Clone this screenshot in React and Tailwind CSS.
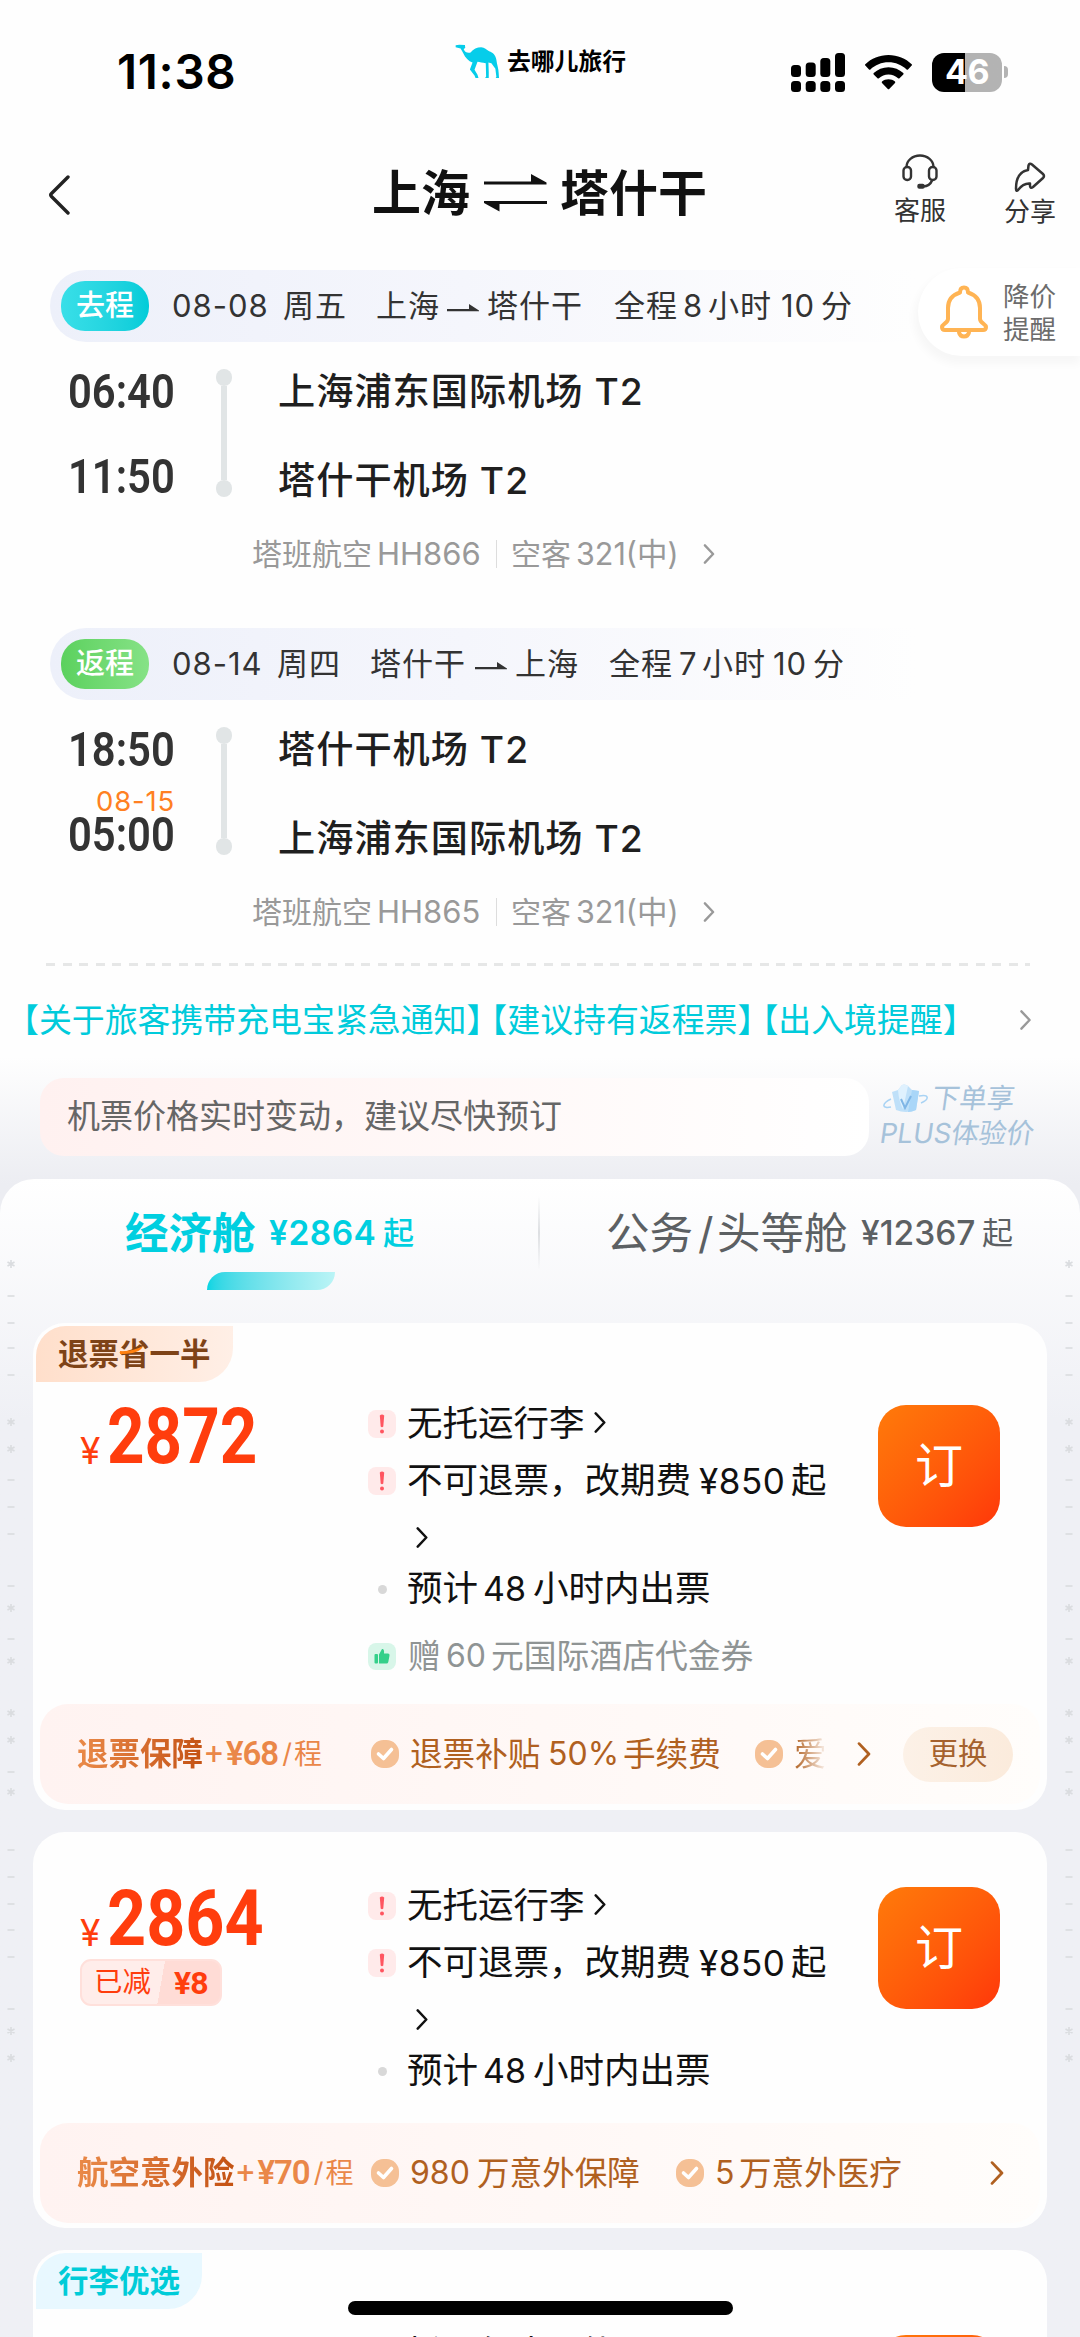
import React from "react";

const tramoIda = {
  etiqueta: "去程",
  colorEtiqueta: "bg-linear-to-r from-[#38dfe8] to-[#00ccd9]",
  fecha: [
    ["08-08", "w-[111px]"],
    ["周五", "w-[93px]"],
    ["上海", "w-[71px]"],
    ["→", "w-[40px]"],
    ["塔什干", "w-[127px]"],
    ["全程", "w-[69px]"],
    ["8", "w-[25px]"],
    ["小时", "w-[73px]"],
    ["10", "w-[40px]"],
    ["分", "w-[32px]"],
  ],
  salida: "06:40",
  llegada: "11:50",
  origen: "上海浦东国际机场",
  destino: "塔什干机场",
  vuelo: "HH866",
};

const tramoVuelta = {
  etiqueta: "返程",
  colorEtiqueta: "bg-linear-to-r from-[#5bd15e] to-[#86e286]",
  fecha: [
    ["08-14", "w-[105px]"],
    ["周四", "w-[93px]"],
    ["塔什干", "w-[105px]"],
    ["→", "w-[40px]"],
    ["上海", "w-[94px]"],
    ["全程", "w-[70px]"],
    ["7", "w-[23px]"],
    ["小时", "w-[71px]"],
    ["10", "w-[40px]"],
    ["分", "w-[32px]"],
  ],
  salida: "18:50",
  llegada: "05:00",
  diaLlegada: "08-15",
  origen: "塔什干机场",
  destino: "上海浦东国际机场",
  vuelo: "HH865",
};

// [posición vertical, símbolo] de la trama lateral
const trama = [
  [1264, "*"], [1296, "-"], [1323, "-"], [1348, "-"], [1375, "-"],
  [1422, "*"], [1449, "*"], [1480, "-"], [1507, "-"], [1534, "-"],
  [1586, "-"], [1608, "*"], [1639, "-"], [1661, "*"], [1713, "*"],
  [1740, "*"], [1772, "-"], [1792, "*"], [1850, "-"], [1877, "-"],
  [1904, "-"], [1930, "-"], [1957, "-"], [2009, "-"], [2031, "*"],
  [2058, "*"],
];

const Chevron = ({ className }) => (
  <svg
    viewBox="0 0 12 22"
    className={className}
    fill="none"
    stroke="currentColor"
    strokeLinecap="round"
    strokeLinejoin="round"
  >
    <path d="M1.5 1.5 10.5 11 1.5 20.5" strokeWidth="2.6" />
  </svg>
);

const Camello = () => (
  <svg viewBox="45 41 136 104" className="w-[45px] h-[35px]" fill="#06cdea">
    <path d="M47 44 58 42 75 43 76 52 71 55C75 65 82 68 92 66C100 55 112 50 124 50C135 51 140 58 148 62C160 65 168 75 170 88C172 105 177 115 177 128L178 143H168L170 139 167 115 155 98 146 96 147 125V143H136L139 138 138 98C128 97 120 95 113 94L104 118 113 133 116 143H107L104 135 90 117 98 96C86 92 76 82 70 68L62 54 47 50Z" />
  </svg>
);

const BarraEstado = () => (
  <div className="flex h-[144px] items-center text-black">
    <div className="ml-[117px] w-[338px] text-[47.5px] font-semibold tracking-[0.7px]">
      11:38
    </div>
    <div className="-mt-[21px] flex items-center">
      <Camello />
      <span className="ml-[7px] w-[284px] text-[23.8px] font-bold leading-none">
        去哪儿旅行
      </span>
    </div>
    <svg viewBox="0 0 54 39" className="h-[39px] w-[54px]" fill="black">
      <rect x="0" y="12" width="10" height="12" rx="3.5" />
      <rect x="14.7" y="9.5" width="10" height="14.5" rx="3.5" />
      <rect x="29.3" y="5" width="10" height="19" rx="3.5" />
      <rect x="44" y="0" width="10" height="24" rx="3.5" />
      <rect x="0" y="28" width="10" height="11" rx="3.5" />
      <rect x="14.7" y="28" width="10" height="11" rx="3.5" />
      <rect x="29.3" y="28" width="10" height="11" rx="3.5" />
      <rect x="44" y="28" width="10" height="11" rx="3.5" />
    </svg>
    <svg viewBox="0 0 47 35" className="ml-[20px] h-[35px] w-[47px]" fill="black">
      <path d="M23.5 0C14.500 0 6.300 3.500.300 9.200-.100 9.600-.100 10.200.300 10.600L4 14.400C4.400 14.800 5 14.800 5.400 14.400 10.200 9.900 16.500 7.200 23.500 7.200S36.800 9.900 41.600 14.400C42 14.800 42.600 14.800 43 14.400L46.700 10.600C47.100 10.200 47.100 9.600 46.700 9.200 40.700 3.500 32.500 0 23.500 0Z" />
      <path d="M23.5 12.200C17.800 12.200 12.600 14.400 8.700 18 8.300 18.400 8.300 19 8.700 19.400L12.500 23.200C12.900 23.600 13.500 23.600 13.900 23.200 16.500 20.800 19.800 19.400 23.500 19.400S30.500 20.800 33.100 23.200C33.500 23.600 34.100 23.600 34.500 23.200L38.300 19.400C38.700 19 38.700 18.400 38.300 18 34.400 14.400 29.200 12.200 23.500 12.200Z" />
      <path d="M23.500 24.200C21 24.200 18.800 25.100 17 26.500 16.600 26.900 16.600 27.500 17 27.900L22.800 33.900C23.200 34.300 23.800 34.300 24.200 33.900L30 27.900C30.400 27.500 30.400 26.900 30 26.500 28.200 25.100 26 24.200 23.500 24.200Z" />
    </svg>
    <div className="ml-[20px] flex h-[39px] w-[70px] items-center justify-center rounded-[12px] bg-linear-to-r from-black from-[47%] to-[#b3b3b3] to-[47%] text-[34px] font-bold leading-none tracking-[-0.5px] text-white">
      46
    </div>
    <div className="ml-[2px] h-[12px] w-[4px] rounded-r-full bg-[#b3b3b3]" />
  </div>
);

const Encabezado = () => (
  <div className="flex h-[98px] items-center">
    <svg
      viewBox="0 0 22 40"
      className="ml-[48px] mt-[3px] h-[40px] w-[22px]"
      fill="none"
      stroke="#222"
      strokeWidth="3.4"
      strokeLinecap="round"
      strokeLinejoin="round"
    >
      <path d="M20 2 3.500 18.500Q2 20 3.500 21.500L20 38" />
    </svg>
    <div className="ml-[302px] flex items-center text-[49px] font-bold leading-none text-[#111]">
      <span className="w-[112px]">上海</span>
      <svg viewBox="0 0 63 38" className="h-[38px] w-[63px]" fill="#111">
        <path d="M0 7.500H47V0L62.500 8.500V10.500H0Z" />
        <path d="M63 27H0V29L15.500 37.500V30H63Z" />
      </svg>
      <span className="ml-[13px] w-[147px]">塔什干</span>
    </div>
    <div className="-mt-[5px] ml-[187px] flex w-[52px] flex-col items-center text-[26px] text-[#333]">
      <svg
        viewBox="0 0 36 36"
        className="h-[36px] w-[36px]"
        fill="none"
        stroke="#333"
        strokeWidth="2.400"
      >
        <path d="M4.500 14V13A13.500 11.500 0 0 1 31.500 13V14" />
        <rect x="1.500" y="13" width="7.500" height="13" rx="3.600" />
        <rect x="27" y="13" width="7.500" height="13" rx="3.600" />
        <path d="M30 26.500Q28 32 21 32.500" />
        <rect x="16.500" y="31" width="5" height="2.600" rx="0.800" fill="#333" />
      </svg>
      <span className="mt-[5px] whitespace-nowrap leading-[32px]">客服</span>
    </div>
    <div className="-mb-[3px] ml-[58px] flex w-[52px] flex-col items-center text-[26px] text-[#333]">
      <svg
        viewBox="0 0 32 32"
        className="h-[32px] w-[32px]"
        fill="none"
        stroke="#333"
        strokeWidth="2.500"
        strokeLinejoin="round"
      >
        <path d="M14.500 4.500Q15.500 1.500 18 3.500L29 13Q31 15 29 17L19 26Q16.500 28 16 25V22.500C10 22 7 25 4 29Q2 31 2 27.500C2 17 6 10.500 14 9Z" />
      </svg>
      <span className="mt-[3px] whitespace-nowrap leading-[32px]">分享</span>
    </div>
  </div>
);

const Tramo = ({ tramo }) => (
  <div className="text-[#333]">
    <div className="ml-[50px] flex h-[72px] items-center rounded-l-[36px] bg-linear-to-r from-[#edf0fa] via-[#f5f6fc] via-40% to-[#fefefe] to-[84%] pl-[11px]">
      <div
        className={`flex h-[50px] w-[88px] items-center justify-center rounded-[24px] text-[29px] font-medium text-white ${tramo.colorEtiqueta}`}
      >
        {tramo.etiqueta}
      </div>
      <div className="ml-[23px] flex items-center text-[31px] leading-[40px] tracking-[1px]">
        {tramo.fecha.map(([texto, ancho], i) =>
          texto === "→" ? (
            <span key={i} className={`shrink-0 ${ancho}`}>
              <svg viewBox="0 0 32 8" className="mt-[3px] h-[8px] w-[32px]" fill="#333">
                <path d="M0 5H22V0L32 6.500V7.200H0Z" />
              </svg>
            </span>
          ) : (
            <span key={i} className={`shrink-0 whitespace-nowrap ${ancho}`}>
              {texto}
            </span>
          )
        )}
      </div>
    </div>

    <div className="flex h-[192px] pt-[25px]">
      <div className="flex w-[175px] flex-col items-end font-[Roboto,'Noto_Sans_CJK_SC',sans-serif] text-[48px] font-semibold">
        <span className="origin-right scale-x-[0.87] leading-[50px]">
          {tramo.salida}
        </span>
        <span className="h-[35px] pt-[10px] font-[Inter,sans-serif] text-[27.5px] font-normal leading-[32px] tracking-[0.8px] text-[#ff8022]">
          {tramo.diaLlegada}
        </span>
        <span className="origin-right scale-x-[0.87] leading-[50px]">
          {tramo.llegada}
        </span>
      </div>
      <div className="ml-[41px] mt-[2px] flex h-[128px] w-[16px] flex-col items-center">
        <span className="h-[17px] w-[16px] rounded-full bg-[#e1e5e6]" />
        <span className="w-[6px] flex-1 bg-[#e1e5e6]" />
        <span className="h-[17px] w-[16px] rounded-full bg-[#e1e5e6]" />
      </div>
      <div className="ml-[46px] flex flex-col gap-[39px] text-[37.200px] font-medium leading-[50px] tracking-[1px] text-[#1f1f1f]">
        <span>{tramo.origen} T2</span>
        <span>{tramo.destino} T2</span>
      </div>
    </div>

    <div className="flex h-[40px] items-center pl-[252px] text-[30px] leading-[40px] text-[#999]">
      <span className="w-[125px]">塔班航空</span>
      <span className="w-[119px] text-[31px]">{tramo.vuelo}</span>
      <span className="h-[28px] w-px bg-[#ddd]" />
      <span className="ml-[14px] w-[65px]">空客</span>
      <span className="w-[127px] text-[30.5px]">321(中)</span>
      <Chevron className="h-[20px] w-[12px]" />
    </div>
  </div>
);

const AlertaPrecio = () => (
  <div className="absolute right-0 top-[268px] flex h-[88px] w-[162px] items-center rounded-l-[44px] bg-white shadow-[-2px_6px_8px_2px_rgba(0,0,0,0.03)]">
    <svg
      viewBox="0 0 48 54"
      className="ml-[22px] h-[54px] w-[48px]"
      fill="none"
      stroke="#ffb454"
      strokeWidth="4"
      strokeLinejoin="round"
      strokeLinecap="round"
    >
      <path d="M20 7.500Q20 2.500 24 2.500T28 7.500C36 10 40 16 40 23V34C40 38 46 39 46 42Q46 45 43 45H5Q2 45 2 42C2 39 8 38 8 34V23C8 16 12 10 20 7.500Z" />
      <path d="M19 47.500Q20 51.500 24 51.500T29 47.500" />
    </svg>
    <div className="ml-[15px] mt-[2px] text-[26.500px] leading-[33px] text-[#6c6c6c]">
      <div>降价</div>
      <div>提醒</div>
    </div>
  </div>
);

const IconoAviso = () => (
  <span className="flex h-[28px] w-[28px] items-center justify-center rounded-[8px] bg-[#ffeaea]">
    <svg viewBox="0 0 6 20" className="h-[20px] w-[6px]" fill="#ff5560">
      <path d="M.8 1.500Q3-.500 5.200 1.500L4.300 12.500Q3 14 1.700 12.500Z" />
      <circle cx="3" cy="17.500" r="2" />
    </svg>
  </span>
);

const IconoPulgar = () => (
  <span className="flex h-[27px] w-[28px] items-center justify-center rounded-[8px] bg-[#d8f6e9]">
    <svg viewBox="0 0 16 16" className="h-[16px] w-[16px]" fill="#34d08a">
      <rect x="0.500" y="6" width="3.500" height="9.500" rx="1" />
      <path d="M5 6.500 8 1Q10.500.500 10 5.500H14Q15.800 5.500 15.500 7.500L14.300 14Q14 15.500 12.500 15.500H5Z" />
    </svg>
  </span>
);

const IconoCheck = () => (
  <svg viewBox="0 0 28 28" className="h-[28px] w-[28px] shrink-0">
    <rect width="28" height="28" rx="12.500" fill="#f5c095" />
    <path
      d="M7.500 14 12.500 18.500 20.500 9.500"
      fill="none"
      stroke="white"
      strokeWidth="3.600"
      strokeLinecap="round"
      strokeLinejoin="round"
    />
  </svg>
);

const Precio = ({ valor, escala = "scale-x-[0.84]" }) => (
  <div className="flex h-[80px] items-end text-[#ff3d0d]">
    <span className="w-[27px] text-[37px] leading-[52px]">¥</span>
    <span
      className={`origin-left font-[Roboto,sans-serif] text-[78px] font-bold leading-[80px] ${escala}`}
    >
      {valor}
    </span>
  </div>
);

const BotonReservar = () => (
  <button className="ml-auto mr-[47px] mt-[6px] h-[122px] w-[122px] shrink-0 rounded-[28px] bg-linear-to-br from-[#ff7a0a] to-[#ff360a] text-[48px] leading-none text-white">
    订
  </button>
);

const Condiciones = ({ regalo }) => (
  <div className="w-[500px] text-[35.5px] leading-[50px] text-[#111]">
    <div className="flex h-[50px] items-center">
      <IconoAviso />
      <span className="ml-[11px] w-[187px]">无托运行李</span>
      <Chevron className="-mt-[4px] h-[21px] w-[12px]" />
    </div>
    <div className="mt-[7px] flex h-[50px] items-center">
      <IconoAviso />
      <span className="ml-[11px] w-[292px]">不可退票，改期费</span>
      <span className="w-[92px] text-[35px] tracking-[0.5px]">¥850</span>
      <span>起</span>
    </div>
    <div className="mt-[6px] flex h-[50px] items-center pl-[48px]">
      <Chevron className="h-[21px] w-[12px]" />
    </div>
    <div className="mt-[2px] flex h-[50px] items-center">
      <span className="ml-[10px] h-[9px] w-[9px] rounded-full bg-[#d8d8d8]" />
      <span className="ml-[20px] w-[76px]">预计</span>
      <span className="w-[50px] text-[34px]">48</span>
      <span>小时内出票</span>
    </div>
    {regalo && (
      <div className="mt-[17px] flex h-[50px] items-center text-[32.8px] text-[#8f9494]">
        <IconoPulgar />
        <span className="ml-[12px] w-[38px]">赠</span>
        <span className="w-[45px] text-[32px]">60</span>
        <span>元国际酒店代金券</span>
      </div>
    )}
  </div>
);

const Seguro = ({ nombre, precio, children }) => (
  <div className="mx-[7px] flex h-[100px] items-center rounded-[28px] bg-linear-to-r from-[#fff3f1] to-[#fffdfb] pl-[37px] text-[32.6px] leading-[50px] text-[#b06020]">
    <div className="flex w-[294px] shrink-0 items-center whitespace-nowrap text-[31.5px] text-[#ea8748]">
      <span className="bg-linear-to-r from-[#ea8a48] to-[#c45212] bg-clip-text font-bold text-transparent">
        {nombre}
      </span>
      <span className="ml-[2px] font-[Roboto,sans-serif]">+</span>
      <span className="ml-[3px] font-[Roboto,sans-serif] text-[33px] font-semibold tracking-[-1px]">
        {precio}
      </span>
      <span className="ml-[4px] text-[27px]">/</span>
      <span className="ml-[2px] text-[28px]">程</span>
    </div>
    {children}
  </div>
);

const Pestanas = () => (
  <div>
    <div className="flex h-[93px] items-center pt-[14px] leading-[60px]">
      <div className="flex w-[538px] items-center pl-[125px] text-[#00cfe0]">
        <span className="w-[144px] text-[43.5px] font-bold">经济舱</span>
        <span className="w-[114px] text-[33.500px] font-semibold tracking-[0.5px]">
          ¥2864
        </span>
        <span className="text-[31px] font-medium">起</span>
      </div>
      <span className="h-[74px] w-[2px] bg-linear-to-b from-transparent via-[#dddfe2] to-transparent" />
      <div className="flex items-center whitespace-nowrap pl-[66px] text-[#5c6063]">
        <span className="w-[92px] text-[43.5px]">公务</span>
        <span className="w-[19px] text-[43px]">/</span>
        <span className="w-[144px] text-[43.5px]">头等舱</span>
        <span className="w-[121px] text-[33.500px] font-medium">¥12367</span>
        <span className="text-[31px]">起</span>
      </div>
    </div>
    <div className="ml-[207px] h-[18px] w-[128px] rounded-br-[18px] rounded-tl-[18px] bg-linear-to-r from-[#00d5e3] to-[#baf4f6]" />
  </div>
);

const Trama = ({ className }) => (
  <div className={`absolute top-0 w-[10px] ${className}`}>
    {trama.map(([y, simbolo], i) => {
      const anterior = i === 0 ? 0 : trama[i - 1][0] + 5;
      return (
        <svg
          key={y}
          viewBox="0 0 10 10"
          className="h-[10px] w-[10px]"
          style={{ marginTop: y - 5 - anterior }}
          stroke="#dadcdf"
          strokeWidth="1.6"
        >
          {simbolo === "*" ? (
            <path d="M5 1V9M1.500 3 8.500 7M8.500 3 1.500 7" />
          ) : (
            <path d="M1.500 5H8.500" />
          )}
        </svg>
      );
    })}
  </div>
);

const App = () => {
  return (
    <div className="relative h-[2337px] w-[1080px] overflow-hidden bg-[#fefefe] font-[Inter,'Noto_Sans_CJK_SC',sans-serif]">
      <BarraEstado />
      <Encabezado />

      <div className="pt-[28px]">
        <Tramo tramo={tramoIda} />
        <div className="h-[54px]" />
        <Tramo tramo={tramoVuelta} />
      </div>
      <AlertaPrecio />

      <div className="ml-[46px] mt-[31px] h-[3px] w-[984px] bg-[repeating-linear-gradient(90deg,#e6e7e7_0_9px,transparent_9px_16.6px)]" />

      <div className="mt-[29px] flex h-[50px] items-center whitespace-nowrap pl-[6px] text-[32.9px] leading-[50px] text-[#00cbdb]">
        <span>【关于旅客携带充电宝紧急通知】</span>
        <span className="-ml-[25px]">【建议持有返程票】</span>
        <span className="-ml-[25px]">【出入境提醒】</span>
        <Chevron className="ml-auto mr-[49px] h-[20px] w-[11px] text-[#999]" />
      </div>

      <div className="bg-linear-to-b from-[#fefefe] from-[12px] to-[#ecedf2] to-[140px] pt-[33px]">
        <div className="flex">
          <div className="ml-[40px] flex h-[78px] w-[829px] items-center rounded-[24px] bg-linear-to-r from-[#fff1f0] to-white pl-[27px] text-[33px] text-[#666]">
            机票价格实时变动，建议尽快预订
          </div>
          <div className="ml-[11px] mt-[3px] text-[27.600px] leading-[35px] text-[#a6c2da]">
            <div className="flex items-center">
              <svg viewBox="0 0 46 30" className="ml-[3px] h-[30px] w-[46px]">
                <path
                  d="M9 8 15 6 19 1Q22-.500 25 2L29 6 36 7 33 26Q23 30 13 26Z"
                  fill="#bfe0f9"
                />
                <path d="M15 6 19 1Q22-.500 25 2L20 25Q16 18 15 6Z" fill="#dff1fe" />
                <path d="M29 6 36 7 33 26Q29 28 25 28Z" fill="#a9d6f8" />
                <path d="M18 15 22 24 28 12" fill="none" stroke="#7fb6e6" strokeWidth="2" />
                <path
                  d="M8 15C-2 20-1 25 8 23M36 12C46 10 47 15 38 19"
                  fill="none"
                  stroke="#a9d3f4"
                  strokeWidth="1.500"
                />
              </svg>
              <span className="-skew-x-8 ml-[3px]">下单享</span>
            </div>
            <div className="-skew-x-8">PLUS体验价</div>
          </div>
        </div>

        <div className="mt-[23px] h-[1158px] rounded-t-[34px] bg-linear-to-b from-white to-[#eff0f5] to-[240px]">
          <Pestanas />

          {/* Primera tarifa */}
          <div className="mx-[33px] mt-[33px] h-[487px] rounded-[32px] bg-[#fefefe] pt-[3px]">
            <div className="relative ml-[3px] flex h-[56px] w-[197px] items-center rounded-br-[34px] rounded-tl-[30px] bg-linear-to-r from-[#ffdfcb] to-[#ffefe6] pl-[22px] text-[30.5px] font-bold text-[#7e4317]">
              退票省一半
              <svg viewBox="0 0 23 8" className="absolute left-[84px] top-[20px] h-[8px] w-[23px]">
                <path d="M0 5Q12 6 23 0 20 8 0 8Z" fill="#ff8010" />
              </svg>
            </div>
            <div className="flex h-[322px] pt-[17px]">
              <div className="-mt-[2px] w-[335px] pl-[47px]">
                <Precio valor="2872" />
              </div>
              <Condiciones regalo />
              <BotonReservar />
            </div>
            <Seguro nombre="退票保障" precio="¥68">
              <IconoCheck />
              <span className="ml-[11px] w-[138px]">退票补贴</span>
              <span className="w-[75px] text-[32px]">50%</span>
              <span className="w-[132px]">手续费</span>
              <IconoCheck />
              <span className="ml-[11px] w-[63px] bg-linear-to-r from-[#b06020] to-transparent to-[34px] bg-clip-text text-transparent">
                爱
              </span>
              <Chevron className="h-[24px] w-[14px]" />
              <span className="ml-[32px] flex h-[55px] w-[110px] items-center justify-center rounded-full bg-linear-to-r from-[#fcf1e7] to-[#fbebdc] text-[29.3px] text-[#a5622e]">
                更换
              </span>
            </Seguro>
          </div>

          {/* Segunda tarifa */}
          <div className="mx-[33px] mt-[22px] h-[396px] rounded-[32px] bg-[#fefefe]">
            <div className="flex h-[291px] pt-[49px]">
              <div className="-mt-[2px] w-[335px] pl-[47px]">
                <Precio valor="2864" escala="scale-x-[0.875]" />
                <div className="flex h-[47px] w-[142px] items-center overflow-hidden rounded-[11px] border-2 border-[#ffe0db] bg-linear-[100deg] from-[#ffedea] from-[57%] to-[#ffdcd6] to-[57%] pl-[12px] text-[28.5px] text-[#ff3d0d]">
                  <span className="w-[80px]">已减</span>
                  <span className="font-[Roboto,sans-serif] text-[32px] font-bold tracking-[-1px]">
                    ¥8
                  </span>
                </div>
              </div>
              <Condiciones />
              <BotonReservar />
            </div>
            <Seguro nombre="航空意外险" precio="¥70">
              <IconoCheck />
              <span className="ml-[11px] w-[67px] text-[32px]">980</span>
              <span className="w-[199px]">万意外保障</span>
              <IconoCheck />
              <span className="ml-[11px] w-[24px] text-[32px]">5</span>
              <span>万意外医疗</span>
              <Chevron className="ml-auto mr-[36px] h-[24px] w-[14px]" />
            </Seguro>
          </div>

          {/* Tercera tarifa, cortada por el borde de la pantalla */}
          <div className="mx-[33px] mt-[22px] h-[487px] rounded-[32px] bg-[#fefefe] pt-[3px]">
            <div className="ml-[3px] flex h-[56px] w-[166px] items-center rounded-br-[34px] rounded-tl-[30px] bg-[#e8f8ff] pl-[22px] text-[30.5px] font-bold text-[#00ccd8]">
              行李优选
            </div>
            <div className="flex pt-[20px]">
              <div className="w-[335px] pl-[47px]">
                <Precio valor="2799" />
              </div>
              <div className="ml-[39px] flex h-[50px] w-[461px] items-center text-[35.5px] text-[#111]">
                <span className="w-[149px]">托运行李</span>
                <span className="w-[24px]">1</span>
                <span>件</span>
              </div>
              <BotonReservar />
            </div>
          </div>
        </div>
      </div>

      <Trama className="left-[6px]" />
      <Trama className="right-[6px]" />

      <div className="absolute bottom-[22px] left-[348px] h-[14px] w-[385px] rounded-full bg-black" />
    </div>
  );
};

export default App;
